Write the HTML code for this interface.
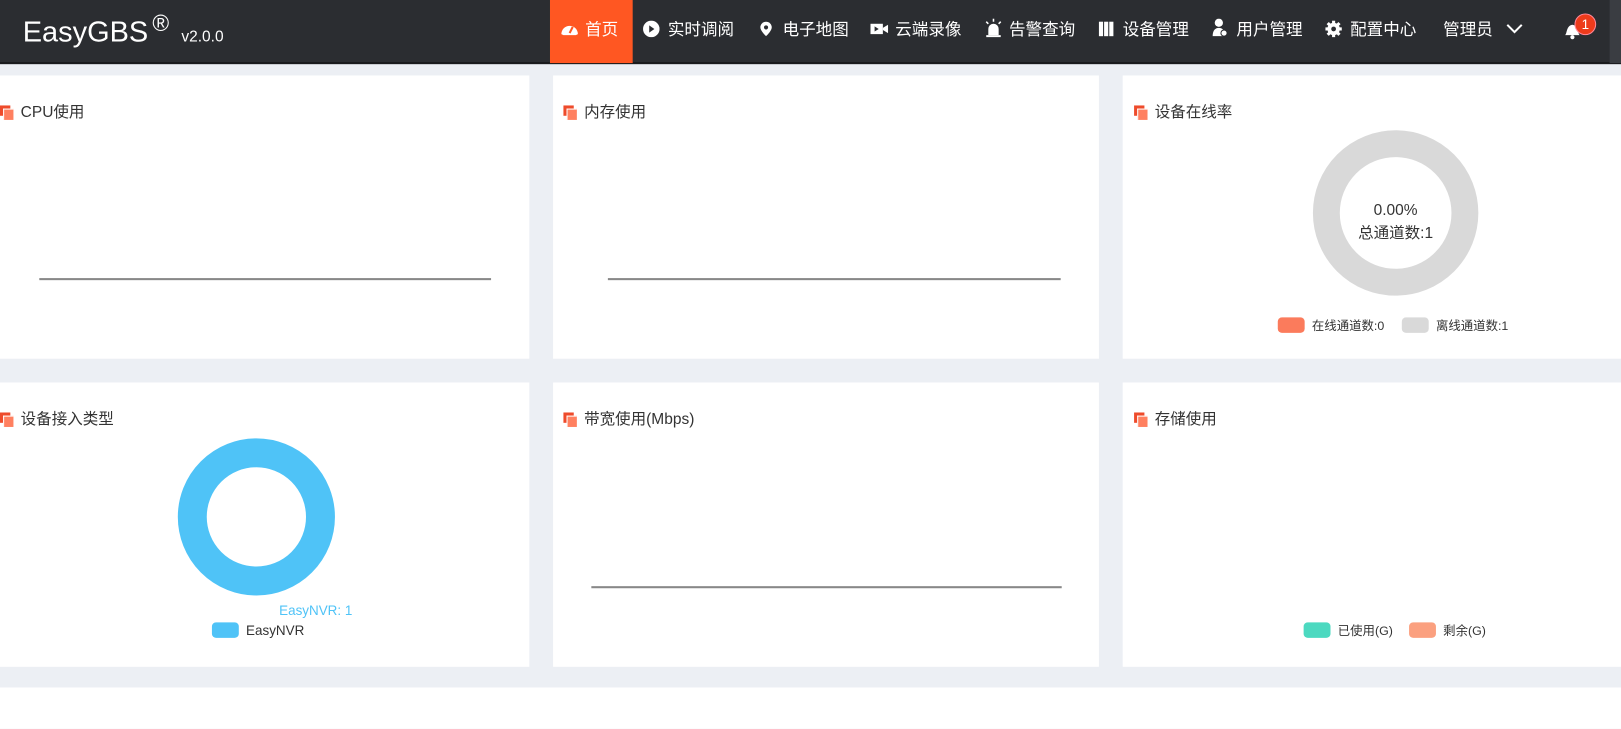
<!DOCTYPE html>
<html><head><meta charset="utf-8">
<style>
*{margin:0;padding:0;box-sizing:border-box}
body{width:1621px;height:704px;overflow:hidden;background:#eceff4;font-family:"Liberation Sans","Noto Sans CJK SC",sans-serif;position:relative}
#w{position:absolute;left:0;top:0;width:1568px;height:681px;transform:scale(1.03380);transform-origin:0 0}
.nav{position:absolute;left:0;top:0;width:1568px;height:62px;background:#2b2d31;border-bottom:2px solid #1a1b1d}
.logo{position:absolute;left:22px;top:10px;color:#fff;font-size:28px}
.logo sup{font-size:22px;vertical-align:10px;margin-left:4px}
.logo small{font-size:15px;margin-left:4px}
.item{position:absolute;top:0;height:61px;line-height:60px;color:#fff;font-size:16px;white-space:nowrap}
.item i{display:inline-block;width:16px;height:16px;vertical-align:-2px;margin-right:8px}
.act{background:#ff5722}
.card{position:absolute;background:#fff}
.title{position:absolute;left:0;top:24px;font-size:15px;color:#333;white-space:nowrap}
.title b{display:inline-block;width:12px;height:13px;position:relative;vertical-align:-2px;margin-right:8px}
.title b:before{content:"";position:absolute;left:0;top:0;width:10px;height:10px;background:#ee4b2b}
.title b:after{content:"";position:absolute;left:3px;top:3px;width:9px;height:10px;background:#ff8060;border-left:1px solid #fff;border-top:1px solid #fff}
.line{position:absolute;height:2px;background:#888}
.lg{position:absolute;font-size:12px;color:#333;white-space:nowrap}
.sw{display:inline-block;width:26px;height:15px;border-radius:4px;vertical-align:-3px;margin-right:7px}
</style></head><body><div id="w">
<div class="nav">
 <div class="logo">EasyGBS<sup>®</sup> <small>v2.0.0</small></div>
 <div class="item act" style="left:532px;width:80px;padding-left:10px"><i><svg width="18" height="16" viewBox="0 0 18 16"><path d="M1 13A8 8 0 0 1 17 13L15 14H3Z" fill="#fff"/><path d="M9 12L12 6" stroke="#ff5722" stroke-width="2"/></svg></i>首页</div>
 <div class="item" style="left:622px"><i><svg width="16" height="16"><circle cx="8" cy="8" r="8" fill="#fff"/><path d="M6 4.5L11 8L6 11.5Z" fill="#2b2d31"/></svg></i>实时调阅</div>
 <div class="item" style="left:733px"><i><svg width="16" height="16" viewBox="0 0 16 16"><path d="M8 1A5.5 5.5 0 0 0 2.5 6.5C2.5 10 8 15 8 15S13.5 10 13.5 6.5A5.5 5.5 0 0 0 8 1Z" fill="#fff"/><circle cx="8" cy="6.5" r="2" fill="#2b2d31"/></svg></i>电子地图</div>
 <div class="item" style="left:842px"><i><svg width="18" height="16"><rect x="0" y="3" width="12" height="10" fill="#fff"/><path d="M12 7L17 4V12L12 9Z" fill="#fff"/><path d="M4 5.5L8 8L4 10.5Z" fill="#2b2d31"/></svg></i>云端录像</div>
 <div class="item" style="left:952px"><i><svg width="18" height="18"><path d="M4 16V10A5 5 0 0 1 14 10V16Z" fill="#fff"/><rect x="2" y="16" width="14" height="2" fill="#fff"/><path d="M9 0V3M2 3L4 5M16 3L14 5" stroke="#fff" stroke-width="1.5"/></svg></i>告警查询</div>
 <div class="item" style="left:1062px"><i><svg width="16" height="16"><rect x="1" y="1" width="4" height="14" fill="#fff"/><rect x="6" y="1" width="4" height="14" fill="#fff"/><rect x="11" y="1" width="4" height="14" fill="#fff"/></svg></i>设备管理</div>
 <div class="item" style="left:1172px"><i><svg width="16" height="18"><circle cx="7" cy="4" r="4" fill="#fff"/><path d="M1 17C1 11 4 9 7 9S13 11 13 17Z" fill="#fff"/><circle cx="12" cy="14" r="3" fill="#fff" stroke="#2b2d31"/></svg></i>用户管理</div>
 <div class="item" style="left:1282px"><i><svg width="16" height="16" viewBox="0 0 16 16"><circle cx="8" cy="8" r="6" fill="#fff"/><path d="M8 0V16M0 8H16M2.3 2.3L13.7 13.7M13.7 2.3L2.3 13.7" stroke="#fff" stroke-width="3"/><circle cx="8" cy="8" r="2.3" fill="#2b2d31"/></svg></i>配置中心</div>
 <div class="item" style="left:1396px">管理员 <svg width="18" height="12" style="margin-left:8px"><path d="M2 2L9 9L16 2" stroke="#fff" stroke-width="2" fill="none"/></svg></div>
 <svg style="position:absolute;left:1511px;top:19px" width="20" height="20"><path d="M3 15C5 13 4 6 10 5C16 6 15 13 17 15Z" fill="#fff"/><circle cx="10" cy="17" r="2" fill="#fff"/></svg>
 <div style="position:absolute;left:1523px;top:13px;width:21px;height:21px;border-radius:50%;background:#ee3b1b;color:#fff;font-size:13px;text-align:center;line-height:20px;border:1px solid #f89">1</div>
 <div style="position:absolute;left:1557px;top:0;width:11px;height:61px;background:#3a3d42"></div>
</div>

<div class="card" style="left:0;top:73px;width:512px;height:274px"><div class="title" style="left:0"><b></b>CPU使用</div><div class="line" style="left:38px;top:196px;width:437px"></div></div>
<div class="card" style="left:535px;top:73px;width:528px;height:274px"><div class="title" style="left:10px"><b></b>内存使用</div><div class="line" style="left:53px;top:196px;width:438px"></div></div>
<div class="card" style="left:1086px;top:73px;width:482px;height:274px"><div class="title" style="left:11px"><b></b>设备在线率</div>
 <div style="position:absolute;left:184px;top:53px;width:160px;height:160px;border-radius:50%;border:26px solid #d9d9d9"></div>
 <div style="position:absolute;left:184px;top:120px;width:160px;text-align:center;font-size:15px;color:#333;line-height:22px">0.00%<br>总通道数:1</div>
 <div class="lg" style="left:150px;top:233px"><span class="sw" style="background:#fb7b5c"></span>在线通道数:0</div>
 <div class="lg" style="left:270px;top:233px"><span class="sw" style="background:#d9d9d9"></span>离线通道数:1</div>
</div>
<div class="card" style="left:0;top:370px;width:512px;height:275px"><div class="title"><b></b>设备接入类型</div>
 <div style="position:absolute;left:172px;top:54px;width:152px;height:152px;border-radius:50%;border:28px solid #4fc3f7"></div>
 <div class="lg" style="left:270px;top:213px;color:#4fc3f7;font-size:13px">EasyNVR: 1</div>
 <div class="lg" style="left:205px;top:232px;font-size:13px"><span class="sw" style="background:#4fc3f7"></span>EasyNVR</div>
</div>
<div class="card" style="left:535px;top:370px;width:528px;height:275px"><div class="title" style="left:10px"><b></b>带宽使用(Mbps)</div><div class="line" style="left:37px;top:197px;width:455px"></div></div>
<div class="card" style="left:1086px;top:370px;width:482px;height:275px"><div class="title" style="left:11px"><b></b>存储使用</div>
 <div class="lg" style="left:175px;top:231px"><span class="sw" style="background:#4cd9c0"></span>已使用(G)</div>
 <div class="lg" style="left:277px;top:231px"><span class="sw" style="background:#fba07f"></span>剩余(G)</div>
</div>
<div class="card" style="left:0;top:665px;width:1568px;height:40px"></div>
</div></body></html>
